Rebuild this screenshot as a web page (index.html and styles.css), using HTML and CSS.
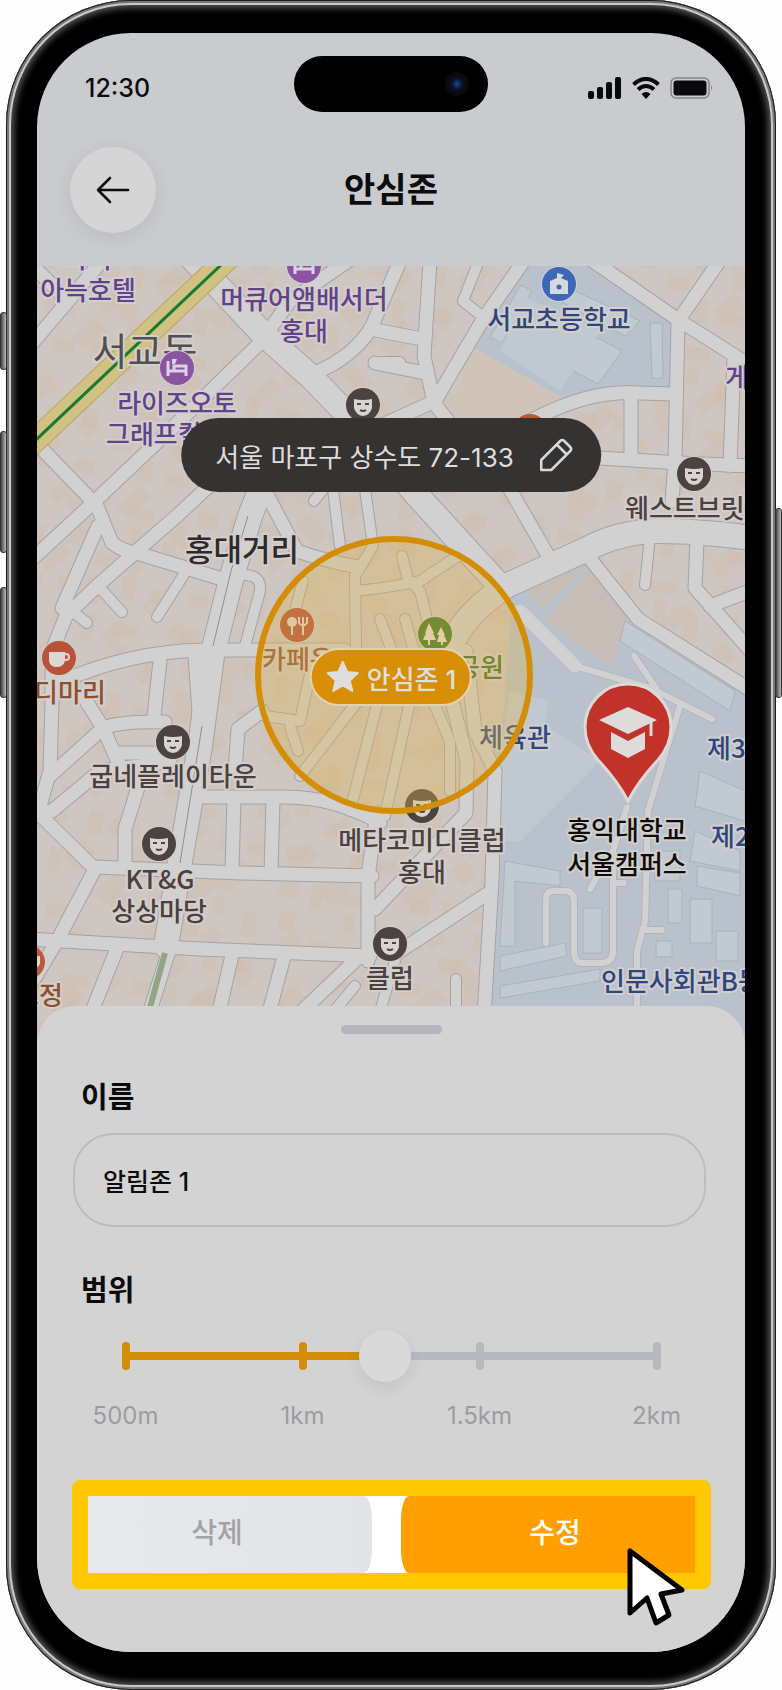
FILE: index.html
```html
<!DOCTYPE html>
<html lang="ko">
<head>
    <meta charset="UTF-8">
    <meta name="viewport" content="width=device-width, initial-scale=1.0">
    <title>안심존</title>
    <link rel="stylesheet" href="styles.css">
</head>
<body>

    <div class="phone">
        <span class="side-key key-action"></span>
        <span class="side-key key-up"></span>
        <span class="side-key key-down"></span>
        <span class="side-key key-power"></span>

        <div class="screen">
            <div class="status-bar">
                <span class="time">12:30</span>
                <span class="island"><span class="camera"></span></span>
                <span class="status-icons">
                    <svg width="34" height="22" viewBox="0 0 34 22">
                        <rect x="0" y="14" width="6" height="8" rx="2"/>
                        <rect x="9" y="10" width="6" height="12" rx="2"/>
                        <rect x="18" y="5" width="6" height="17" rx="2"/>
                        <rect x="27" y="0" width="6" height="22" rx="2"/>
                    </svg>
                    <svg width="28" height="22" viewBox="0 0 28 22">
                        <path d="M1.500 7.500Q14 -3.500 26.500 7.500" fill="none" stroke="#08080f" stroke-width="4"/>
                        <path d="M6 12.500Q14 5.500 22 12.500" fill="none" stroke="#08080f" stroke-width="4"/>
                        <path d="M9.500 17Q14 13 18.500 17L14 22Z"/>
                    </svg>
                    <svg width="43" height="22" viewBox="0 0 43 22">
                        <rect x="1" y="1" width="38" height="20" rx="5" fill="none" stroke="#86868a" stroke-width="1.500"/>
                        <rect x="3.500" y="3.500" width="33" height="15" rx="3"/>
                        <path d="M41 8q2 3 0 6z" fill="#86868a"/>
                    </svg>
                </span>
            </div>

            <header class="header">
                <button class="back" type="button" aria-label="뒤로">
                    <svg width="34" height="28" viewBox="0 0 34 28">
                        <path d="M32 14H2M14 2L2 14l12 12" fill="none" stroke="#0c0c0c" stroke-width="2.600" stroke-linecap="round" stroke-linejoin="round"/>
                    </svg>
                </button>
                <h1>안심존</h1>
            </header>

            <div class="map">
                <svg class="map-art" viewBox="37 265 708 780" preserveAspectRatio="xMidYMin slice">
                    <defs>
                        <pattern id="blocks" width="132" height="118" patternUnits="userSpaceOnUse" patternTransform="rotate(8)">
                            <path class="block" d="M4 6h20v16H4zM36 4h12v26H36zM8 36h16v20H8zM66 10h26v12H66zM72 30h12v18H72zM104 40h14v26H104zM40 60h22v14H40zM6 88h20v14H6zM70 80h14v24H70zM98 90h24v12H98z"/>
                        </pattern>
                        <pattern id="blocks2" width="170" height="146" patternUnits="userSpaceOnUse" patternTransform="rotate(-40)">
                            <path class="block" d="M10 12h30v18H10zM60 6h18v30H60zM104 24h34v16H104zM22 60h16v26H22zM70 66h34v22H70zM126 80h18v20H126zM8 112h28v18H8zM60 116h20v14H60z"/>
                        </pattern>
                        <g id="face">
                            <circle r="18" fill="#d3cdc9"/>
                            <circle r="17" fill="#4b4341"/>
                            <path d="M-9-6Q0-4 9-6V3Q7 10 0 11Q-7 10-9 3Z" fill="#d8d4d1"/>
                            <path d="M-6-1h4M2-1h4M-3 5q3 2 6 0" stroke="#4b4341" stroke-width="2" fill="none"/>
                        </g>
                        <g id="bed">
                            <circle r="18" fill="#d3cdc9"/>
                            <circle r="17" fill="#8a54a3"/>
                            <path d="M-9-7V8M-9 3H9M9 8V-2H-3V3" stroke="#ddd3e0" stroke-width="3" fill="none"/>
                            <path d="M-5-9h5l-2 5h-3z" fill="#ddd3e0"/>
                        </g>
                        <!-- streets grouped by width, drawn once as outline and once as fill -->
                        <g id="wide">
                            <path d="M190 255L262 332L310 375L352 418L415 492L500 585"/>
                            <path d="M448 650Q465 610 510 583L585 549Q620 530 660 530T760 538"/>
                            <path d="M262 485L250 515L232 575L212 655L200 745L180 860L166 945"/>
                        </g>
                        <g id="medium">
                            <path d="M262 340L190 410L95 500L30 560"/>
                            <path d="M265 335L290 300L355 255"/>
                            <path d="M30 262L68 300L30 345M68 300L100 262"/>
                            <path d="M44 450L97 505L112 542Q122 550 140 553L222 578"/>
                            <path d="M225 470L180 512L97 585L66 615L52 650V700L50 770L38 812L95 868L57 940L30 985"/>
                            <path d="M98 525L62 607"/>
                            <path d="M58 682Q130 650 205 649L345 649"/>
                            <path d="M160 660L154 715"/>
                            <path d="M195 655L200 725"/>
                            <path d="M83 695L103 727L122 770M103 727Q120 720 165 721M103 727L50 775M118 752H160"/>
                            <path d="M38 812L52 810L100 770L140 765L170 760"/>
                            <path d="M140 780L125 828V866"/>
                            <path d="M95 866L240 872L372 875"/>
                            <path d="M30 938L200 948L370 955"/>
                            <path d="M190 796H285Q335 796 380 822"/>
                            <path d="M234 798L232 870M273 798L271 872"/>
                            <path d="M377 812L368 875V960"/>
                            <path d="M118 945L88 1020M233 950L218 1015M285 952L268 1015M360 955L300 1012"/>
                            <path d="M172 940L150 1010" />
                            <path d="M315 372Q355 355 372 325L400 260"/>
                            <path d="M430 260L424 355L434 402L452 425"/>
                            <path d="M525 258L482 320L435 400L380 425"/>
                            <path d="M590 258L680 320L740 358"/>
                            <path d="M718 262L678 320L675 460L672 500"/>
                            <path d="M530 420Q590 388 640 392L675 393"/>
                            <path d="M600 457L680 462L750 465M734 355L730 465M631 395V455"/>
                            <path d="M508 485L550 558M583 549L638 618L755 692"/>
                            <path d="M370 328L422 338M375 362L425 372"/>
                            <path d="M697 540L695 587L755 655M710 605L755 588"/>
                            <path d="M466 650L475 730L495 770L492 880L484 1015"/>
                            <path d="M452 700L467 760L466 812L375 908"/>
                            <path d="M487 893L400 950"/>
                            <path d="M265 490L297 550Q325 560 358 566"/>
                            <path d="M262 710L238 728L235 770"/>
                        </g>
                        <g id="narrow">
                            <path d="M98 585L122 611M72 610L87 622M183 575L157 616"/>
                            <path d="M235 575Q262 570 260 590L245 645"/>
                            <path d="M333 488L340 545M365 488L373 545L355 575L356 650"/>
                            <path d="M478 262L463 300L482 315"/>
                            <path d="M383 361H400"/>
                            <path d="M303 580L292 620M315 650L300 720L265 715M290 725L298 750"/>
                            <path d="M402 555L408 578L420 590L435 650M356 590Q400 585 420 580L458 555"/>
                            <path d="M380 618L392 650M405 618L414 650"/>
                            <path d="M358 700L300 775M378 700L350 810M410 700L385 815M435 705L450 740V790"/>
                            <path d="M650 535L645 584"/>
                            <path d="M314 500L330 480M395 960L380 1010M456 1010V978M355 985L330 1015"/>
                        </g>
                        <g id="paths">
                            <path d="M575 665L650 687L712 718M634 655L658 690M680 705L660 770L648 810L645 920L637 950V1015M645 929H662"/>
                            <path d="M627 806L613 850V950Q613 962 600 962H583Q574 962 574 950V900Q574 890 565 890H553Q546 890 546 900V942M613 882H624M600 870L590 888"/>
                        </g>
                    </defs>

                    <rect x="0" y="240" width="800" height="820" fill="#cec6c1"/>
                    <rect x="0" y="240" width="800" height="820" fill="url(#blocks2)"/>
                    <rect x="0" y="240" width="800" height="820" fill="url(#blocks)"/>
                    <path d="M475 347L565 398L530 430H440Z" fill="#d0c4b9"/>

                    <path class="campus" d="M522 260L475 347L565 398Q590 386 672 387V320L590 260Z"/>
                    <path class="hall" d="M521 284L532 290L502 342L490 336ZM592 334L622 350L598 383L570 368ZM650 322H662L663 377H652ZM575 290L640 320L625 335L560 300Z"/>
                    <path class="lawn" d="M525 296L600 330L560 390L500 350Z"/>

                    <path class="campus" d="M512 592L583 552L638 618L760 695V1060H490L497 760L505 700Z"/>
                    <path d="M527 590L583 557L590 562L543 608ZM560 600L592 566L636 610L610 665L545 620Z" fill="#c6bdb6"/>
                    <path class="lawn" d="M510 690L548 700L545 725L600 760L520 840H497L500 760Z"/>
                    <path class="hall" d="M625 620L735 690L730 710L620 640ZM505 860L560 870V885L515 880V945H500ZM500 955L565 942L567 955L500 970ZM500 985L600 968V980L500 997ZM583 907H602V952H583ZM668 888H682V922H668ZM690 898H712V942H690ZM716 930H738V960H716ZM656 940H672V956H656ZM700 770L745 790V820L695 805ZM695 830L740 850V870L690 860ZM697 865L740 872V895L697 885ZM655 850H680V880H655Z"/>

                    <use href="#wide" class="street casing-wide"/>
                    <use href="#medium" class="street casing-medium"/>
                    <use href="#narrow" class="street casing-narrow"/>
                    <use href="#paths" class="street casing-path"/>
                    <use href="#wide" class="street fill-wide"/>
                    <use href="#medium" class="street fill-medium"/>
                    <use href="#narrow" class="street fill-narrow"/>
                    <use href="#paths" class="street fill-path"/>
                    <path d="M520 610L575 665" class="street fill-medium"/>
                    <path d="M248 515L231 570L213 645M202 725L180 862" stroke="#8f8d8d" fill="none"/>
                    <path d="M165 952L149 1010" stroke="#90a684" stroke-width="6"/>

                    <path d="M20 454L240 246" stroke="#b9a662" stroke-width="24"/>
                    <path d="M20 454L240 246" stroke="#d1c183" stroke-width="22"/>
                    <path d="M20 454L240 246" stroke="#187a2e" stroke-width="3"/>

                    <g class="poi hotel">
                        <text x="88" y="267">바이</text>
                        <text x="88" y="299">아늑호텔</text>
                        <text x="304" y="308">머큐어앰배서더</text>
                        <text x="304" y="340">홍대</text>
                        <text x="177" y="412">라이즈오토</text>
                        <text x="106" y="443" class="from-left">그래프컬렉션</text>
                        <text x="725" y="386" class="from-left">게스트</text>
                    </g>
                    <text x="145" y="364" class="district">서교동</text>
                    <text x="242" y="560" class="street-name">홍대거리</text>
                    <g class="poi school">
                        <text x="559" y="328">서교초등학교</text>
                        <text x="515" y="746">체육관</text>
                        <text x="707" y="757" class="from-left">제3</text>
                        <text x="711" y="845" class="from-left">제2</text>
                        <text x="601" y="990" class="from-left">인문사회관B동</text>
                    </g>
                    <g class="poi place">
                        <text x="625" y="517" class="from-left">웨스트브릿지</text>
                        <text x="173" y="785">굽네플레이타운</text>
                        <text x="160" y="888">KT&amp;G</text>
                        <text x="159" y="920">상상마당</text>
                        <text x="422" y="849">메타코미디클럽</text>
                        <text x="422" y="881">홍대</text>
                        <text x="390" y="987">클럽</text>
                    </g>
                    <g class="poi food">
                        <text x="70" y="701">디마리</text>
                        <text x="262" y="668" class="from-left">카페온</text>
                        <text x="39" y="1004">요정</text>
                    </g>
                    <text x="480" y="676" class="poi park">공원</text>

                    <use href="#bed" x="304" y="265"/>
                    <use href="#bed" x="177" y="367"/>
                    <use href="#face" x="363" y="404"/>
                    <use href="#face" x="694" y="473"/>
                    <use href="#face" x="173" y="741"/>
                    <use href="#face" x="159" y="843"/>
                    <use href="#face" x="422" y="805"/>
                    <use href="#face" x="390" y="943"/>
                    <g transform="translate(559 283)">
                        <circle r="18" fill="#cdd3da"/>
                        <circle r="17" fill="#3e68b5"/>
                        <path d="M-9 10V-3L-2-6V-11L5-9L2-6L9-3V10Z" fill="#d5d9df"/>
                        <circle cy="3" r="2.500" fill="#3e68b5"/>
                    </g>
                    <g transform="translate(59 657)">
                        <circle r="18" fill="#d3cdc9"/>
                        <circle r="17" fill="#b8533a"/>
                        <path d="M-10-6H6V3Q4 9-2 9Q-9 9-10 3Z" fill="#ddd6d2"/>
                        <circle cx="7" cy="-1" r="3" fill="none" stroke="#ddd6d2" stroke-width="2"/>
                    </g>
                    <circle cx="28" cy="961" r="17" fill="#bd5a3c"/>
                    <path d="M28 955h12v8q-4 6-8 4z" fill="#ddd6d2"/>
                    <circle cx="530" cy="430" r="17" fill="#bd5a34"/>
                    <g transform="translate(297 624)">
                        <circle r="18" fill="#d3cdc9"/>
                        <circle r="17" fill="#b54c35"/>
                        <circle cx="-5" cy="-3" r="5" fill="#ddd6d2"/>
                        <path d="M-5 0V10M6 0V10M2-8V-2Q6 3 10-2V-8M6-8V0" stroke="#ddd6d2" stroke-width="2" fill="none"/>
                    </g>
                    <g transform="translate(435 633)">
                        <circle r="18" fill="#d3cdc9"/>
                        <circle r="17" fill="#3a7620"/>
                        <path d="M-6-11L-1-1H-2L1 6H-12L-9-1H-10ZM6-7L10 1H9L12 8H2L4 1H2Z" fill="#e0dfd0"/>
                        <path d="M-6 5V11M7 7V11" stroke="#e0dfd0" stroke-width="2"/>
                    </g>

                    <circle class="zone" cx="394" cy="674" r="136"/>

                    <path class="pin" d="M628 800Q617 779 598 759Q585 744 585 726A43 43 0 0 1 671 726Q671 744 658 759Q639 779 628 800Z"/>
                    <path d="M628 706L657 719L628 733L599 719ZM611 731L628 740L645 731V748L628 757L611 748Z" fill="#dddcdb"/>
                    <path d="M651 721V735" stroke="#dddcdb" stroke-width="3"/>
                    <g class="poi campus-name">
                        <text x="627" y="839">홍익대학교</text>
                        <text x="627" y="873">서울캠퍼스</text>
                    </g>
                </svg>

                <button class="address" type="button">
                    서울 마포구 상수도 72-133
                    <svg width="34" height="34" viewBox="0 0 34 34">
                        <path d="M2 32V22L21 3Q23 1 25 3L31 9Q33 11 31 13L12 32ZM18 7L27 16" fill="none" stroke="#d9d9d9" stroke-width="2.500" stroke-linejoin="round"/>
                    </svg>
                </button>

                <div class="zone-chip">
                    <svg width="34" height="34" viewBox="0 0 34 34">
                        <path d="M17 2L21.500 12L32 13L24 20.500L26.500 31L17 25.500L7.500 31L10 20.500L2 13L12.500 12Z" fill="#dedede" stroke="#dedede" stroke-width="2" stroke-linejoin="round"/>
                    </svg>
                    안심존 1
                </div>
            </div>

            <form class="sheet">
                <span class="handle"></span>
                <label for="zoneName">이름</label>
                <input type="text" id="zoneName" name="zoneName" value="알림존 1">

                <label for="zoneRange">범위</label>
                <div class="slider">
                    <span class="track"></span>
                    <span class="tick on"></span>
                    <span class="tick on"></span>
                    <span class="tick"></span>
                    <span class="tick"></span>
                    <input type="range" id="zoneRange" name="zoneRange" min="500" max="2000" step="1" value="1233">
                </div>
                <div class="scale">
                    <span>500m</span>
                    <span>1km</span>
                    <span>1.5km</span>
                    <span>2km</span>
                </div>

                <div class="actions">
                    <button class="delete" type="button">삭제</button>
                    <button class="edit" type="submit">수정</button>
                    <svg class="cursor" width="60" height="80" viewBox="0 0 60 80">
                        <path d="M4 4L4 66L21 51L30 76L43 68L35 47L56 43Z" fill="#fff" stroke="#000" stroke-width="5" stroke-linejoin="round"/>
                    </svg>
                </div>
            </form>
        </div>
    </div>

</body>
</html>
```

FILE: styles.css
```css
* {
    box-sizing: border-box;
}

body {
    margin: 0;
    background-color: #fefefe;
    font-family: Inter, "Noto Sans CJK KR", sans-serif;
    color: #0c0c0c;
}

button,
input {
    font-family: inherit;
    margin: 0;
}

/* phone body */
.phone {
    position: relative;
    display: flex;
    min-height: 100vh;
    margin: 0 6px;
    padding: 33px 31px 38px;
    border-radius: 125px;
    background-color: #000;
    box-shadow: inset 0 0 0 1px #1c1c1c, inset 0 0 0 3px #777, inset 0 0 0 5px #c9c9c9, inset 0 0 6px 8px #555;
}

.side-key {
    position: absolute;
    width: 7px;
    border: 1px solid #333;
    border-radius: 3px;
    background: linear-gradient(to right, #444, #bbb);
}

.key-action {
    left: -6px;
    top: 312px;
    height: 58px;
}

.key-up {
    left: -6px;
    top: 431px;
    height: 122px;
}

.key-down {
    left: -6px;
    top: 587px;
    height: 111px;
}

.key-power {
    right: -6px;
    top: 508px;
    height: 190px;
}

.screen {
    flex: 1;
    display: flex;
    flex-direction: column;
    min-width: 0;
    border-radius: 94px;
    overflow: hidden;
    background-color: #cacbcf;
}

/* status bar */
.status-bar {
    display: grid;
    grid-template-columns: 1fr 194px 1fr;
    align-items: end;
    padding: 23px 32px 0 48px;
    height: 79px;
}

.time {
    font-size: 25px;
    font-weight: 500;
    line-height: 48px;
}

.island {
    display: flex;
    align-items: center;
    justify-content: flex-end;
    height: 56px;
    margin: 0 8px 0 -8px;
    width: 194px;
    padding-right: 19px;
    border-radius: 28px;
    background-color: #000;
}

.camera {
    width: 24px;
    height: 24px;
    border-radius: 50%;
    background: radial-gradient(circle, #1d4a9c 0, #0a1430 5px, #0b0b0f 9px);
}

.status-icons {
    display: flex;
    justify-content: flex-end;
    align-items: center;
    gap: 10px;
    height: 48px;
    fill: #08080f;
}

/* header */
.header {
    display: grid;
    grid-template-columns: 86px 1fr 86px;
    align-items: center;
    padding: 35px 33px 33px;
}

.back {
    display: flex;
    align-items: center;
    justify-content: center;
    width: 86px;
    height: 86px;
    border: none;
    border-radius: 50%;
    background-color: #d5d5d5;
    box-shadow: 0 4px 20px rgba(0, 0, 0, 0.08);
}

h1 {
    margin: 0;
    font-size: 34px;
    line-height: 48px;
    font-weight: 700;
    text-align: center;
}

/* map */
.map {
    position: relative;
    flex: 1;
    min-height: 400px;
    overflow: hidden;
}

.map-art {
    position: absolute;
    inset: 0;
    width: 100%;
    height: 100%;
}

.block {
    fill: #d1bdae;
    opacity: 0.45;
}

.campus {
    fill: #b9c2cc;
}

.lawn {
    fill: #c1c9d0;
}

.hall {
    fill: #c2cad1;
    stroke: #aab2ba;
}

.street {
    fill: none;
    stroke: #d1d1d1;
    stroke-linecap: round;
    stroke-linejoin: round;
}

.casing-wide {
    stroke: #a5a3a2;
    stroke-width: 26px;
}

.casing-medium {
    stroke: #a5a3a2;
    stroke-width: 15px;
}

.casing-narrow {
    stroke: #a5a3a2;
    stroke-width: 12px;
}

.casing-path {
    stroke: #b3b6b9;
    stroke-width: 8px;
}

.fill-wide {
    stroke-width: 24px;
}

.fill-medium {
    stroke-width: 13px;
}

.fill-narrow {
    stroke-width: 10px;
}

.fill-path {
    stroke-width: 6px;
}

.map-art text {
    font-family: "Noto Sans CJK KR", sans-serif;
    text-anchor: middle;
    paint-order: stroke;
    stroke: #d3cfcd;
    stroke-width: 4px;
    stroke-linejoin: round;
}

.map-art .from-left {
    text-anchor: start;
}

.poi {
    font-size: 26px;
    font-weight: 500;
}

.hotel {
    fill: #61428a;
}

.school {
    fill: #2d4680;
}

.place {
    fill: #4b403d;
}

.food {
    fill: #8f4f2c;
}

.park {
    fill: #356b20;
}

.campus-name {
    fill: #0c0c0c;
}

.district {
    font-size: 38px;
    fill: #544f4d;
}

.street-name {
    font-size: 31px;
    font-weight: 500;
    fill: #2c2a2c;
}

.zone {
    fill: rgba(222, 180, 84, 0.36);
    stroke: #d38e06;
    stroke-width: 6px;
}

.pin {
    fill: #c0322a;
    stroke: #dcdad9;
    stroke-width: 3px;
}

.address {
    position: absolute;
    top: 152px;
    left: 50%;
    transform: translateX(-50%);
    display: flex;
    align-items: center;
    gap: 25px;
    height: 74px;
    padding: 0 28px 0 34px;
    border: none;
    border-radius: 37px;
    background-color: #353232;
    color: #dedede;
    font-size: 26px;
    white-space: nowrap;
}

.zone-chip {
    position: absolute;
    top: 382px;
    left: 50%;
    transform: translateX(-50%);
    display: flex;
    align-items: center;
    gap: 7px;
    height: 58px;
    padding: 0 14px;
    border: 2px solid #e0d3b4;
    border-radius: 29px;
    background-color: #d88f05;
    color: #dedede;
    font-size: 26px;
    font-weight: 500;
    white-space: nowrap;
}

/* bottom sheet */
.sheet {
    position: relative;
    display: flex;
    flex-direction: column;
    margin-top: -38px;
    padding: 19px 0 63px;
    border-radius: 38px 38px 0 0;
    background-color: #d3d3d3;
}

.handle {
    align-self: center;
    width: 101px;
    height: 9px;
    border-radius: 5px;
    background-color: #b5b6bb;
}

label {
    margin: 44px 44px 0;
    font-size: 29px;
    line-height: 40px;
    font-weight: 600;
}

input[type="text"] {
    height: 94px;
    margin: 15px 39px 0 36px;
    padding: 0 28px;
    border: 2px solid #bcbdc0;
    border-radius: 40px;
    background: none;
    color: #0c0c0c;
    font-size: 25px;
    font-weight: 500;
}

.slider {
    position: relative;
    display: grid;
    grid-template-columns: repeat(4, 1fr);
    place-items: center;
    height: 52px;
    margin-top: 19px;
}

.track {
    position: absolute;
    left: 12.5%;
    right: 12.5%;
    height: 8px;
    background: linear-gradient(to right, #d38d08 49%, #b6b9be 49%);
}

.tick {
    position: relative;
    width: 8px;
    height: 28px;
    border-radius: 4px;
    background-color: #b6b9be;
}

.tick.on {
    background-color: #d38d08;
}

/* the thumb centre travels from the first tick to the last one */
input[type="range"] {
    position: absolute;
    left: calc(12.5% - 26px);
    width: calc(75% + 52px);
    height: 52px;
    appearance: none;
    background: none;
}

input[type="range"]::-webkit-slider-thumb {
    appearance: none;
    width: 52px;
    height: 52px;
    border-radius: 50%;
    background-color: #d9d9d9;
    box-shadow: 0 6px 16px rgba(0, 0, 0, 0.08);
}

.scale {
    display: grid;
    grid-template-columns: repeat(4, 1fr);
    margin-top: 19px;
    color: #9c9ca1;
    font-size: 24px;
    line-height: 30px;
    text-align: center;
}

.actions {
    position: relative;
    display: grid;
    grid-template-columns: 284px 1fr;
    gap: 29px;
    height: 109px;
    margin: 49px 34px 0 35px;
    border: 16px solid #ffc800;
    border-radius: 8px;
    background-color: #fff;
}

.actions button {
    border: none;
    font-size: 28px;
    line-height: 36px;
    font-weight: 500;
}

.delete {
    padding: 0 26px 4px 0;
    border-radius: 0 8px 8px 0 / 0 24px 24px 0;
    background: linear-gradient(to right, #e7e9ee, #e3e4e8);
    color: #a2a3a7;
}

.edit {
    padding: 0 0 4px 14px;
    border-radius: 8px 0 0 8px / 24px 0 0 24px;
    background-color: #ffa000;
    color: #fff;
}

.cursor {
    position: absolute;
    right: 9px;
    bottom: -54px;
}
```
